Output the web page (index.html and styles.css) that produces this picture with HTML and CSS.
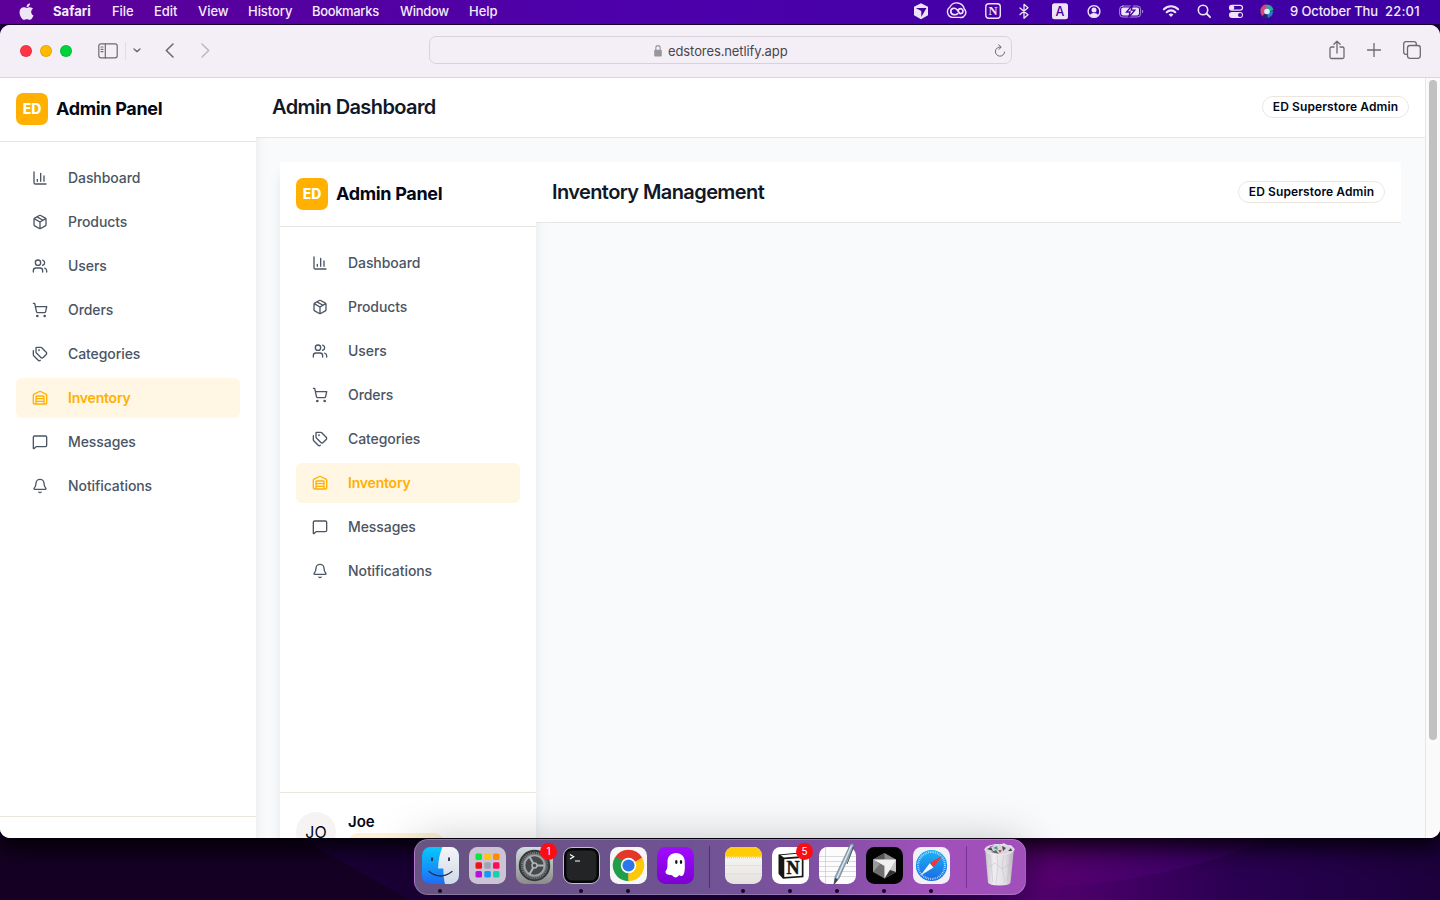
FILE: index.html
```html
<!DOCTYPE html>
<html lang="en">
<head>
<meta charset="utf-8">
<title>Admin Panel</title>
<link rel="stylesheet" href="styles.css">
</head>
<body>
<svg class="sprite" aria-hidden="true">
  <symbol id="i-chart" viewBox="0 0 24 24"><path d="M3 3v16a2 2 0 0 0 2 2h16M18 17V9M13 17V5M8 17v-3"/></symbol>
  <symbol id="i-package" viewBox="0 0 24 24"><path d="M11 21.73a2 2 0 0 0 2 0l7-4A2 2 0 0 0 21 16V8a2 2 0 0 0-1-1.73l-7-4a2 2 0 0 0-2 0l-7 4A2 2 0 0 0 3 8v8a2 2 0 0 0 1 1.73zM12 22V12M3.29 7 12 12l8.71-5M7.5 4.27l9 5.15"/></symbol>
  <symbol id="i-users" viewBox="0 0 24 24"><path d="M16 21v-2a4 4 0 0 0-4-4H6a4 4 0 0 0-4 4v2M22 21v-2a4 4 0 0 0-3-3.87M16 3.13a4 4 0 0 1 0 7.75"/><circle cx="9" cy="7" r="4"/></symbol>
  <symbol id="i-cart" viewBox="0 0 24 24"><circle cx="8" cy="21" r="1"/><circle cx="19" cy="21" r="1"/><path d="M2.05 2.05h2l2.66 12.42a2 2 0 0 0 2 1.58h9.78a2 2 0 0 0 1.95-1.57l1.65-7.43H5.12"/></symbol>
  <symbol id="i-tags" viewBox="0 0 24 24"><path d="M13.172 2a2 2 0 0 1 1.414.586l6.71 6.71a2.4 2.4 0 0 1 0 3.408l-4.592 4.592a2.4 2.4 0 0 1-3.408 0l-6.71-6.71A2 2 0 0 1 6 9.172V3a1 1 0 0 1 1-1zM2 7v6.172a2 2 0 0 0 .586 1.414l6.71 6.71a2.4 2.4 0 0 0 3.191.193"/><circle cx="10.5" cy="6.5" r=".5"/></symbol>
  <symbol id="i-warehouse" viewBox="0 0 24 24"><path d="M18 21V10a1 1 0 0 0-1-1H7a1 1 0 0 0-1 1v11M22 19a2 2 0 0 1-2 2H4a2 2 0 0 1-2-2V8a2 2 0 0 1 1.132-1.803l7.95-3.974a2 2 0 0 1 1.837 0l7.948 3.974A2 2 0 0 1 22 8zM6 13h12M6 17h12"/></symbol>
  <symbol id="i-message" viewBox="0 0 24 24"><path d="M22 17a2 2 0 0 1-2 2H6.828a2 2 0 0 0-1.414.586l-2.202 2.202A.71.71 0 0 1 2 21.286V5a2 2 0 0 1 2-2h16a2 2 0 0 1 2 2z"/></symbol>
  <symbol id="i-bell" viewBox="0 0 24 24"><path d="M10.268 21a2 2 0 0 0 3.464 0M3.262 15.326A1 1 0 0 0 4 17h16a1 1 0 0 0 .74-1.673C19.41 13.956 18 12.499 18 8A6 6 0 0 0 6 8c0 4.499-1.411 5.956-2.738 7.326"/></symbol>
  <linearGradient id="g-finder" x2="0" y2="1"><stop stop-color="#08c8fd"/><stop offset="1" stop-color="#1d6cf5"/></linearGradient>
  <linearGradient id="g-face" x2="0" y2="1"><stop stop-color="#f5f5f7"/><stop offset="1" stop-color="#cfd9e8"/></linearGradient>
  <linearGradient id="g-gear" x2="0" y2="1"><stop stop-color="#d3dde2"/><stop offset="1" stop-color="#8c8b88"/></linearGradient>
  <linearGradient id="g-ghost" x2="0" y2="1"><stop stop-color="#a00cff"/><stop offset="1" stop-color="#7d00d2"/></linearGradient>
  <linearGradient id="g-paper" x2="0" y2="1"><stop stop-color="#fbfaf8"/><stop offset="1" stop-color="#e4e1de"/></linearGradient>
  <linearGradient id="g-safari" x2="0" y2="1"><stop stop-color="#19b4f8"/><stop offset="1" stop-color="#1b68e2"/></linearGradient>
  <linearGradient id="g-trash" x2="1" y2="0"><stop stop-color="#c3bfc8"/><stop offset=".3" stop-color="#efedf1"/><stop offset=".7" stop-color="#e1dee3"/><stop offset="1" stop-color="#b7b2bb"/></linearGradient>
  <linearGradient id="g-wave" x2="1" y2="0"><stop stop-color="#22004a"/><stop offset=".35" stop-color="#56006f"/><stop offset=".7" stop-color="#42006a"/><stop offset="1" stop-color="#2d0055"/></linearGradient>
  <linearGradient id="g-deep" x2="1" y2="0"><stop stop-color="#1d0042"/><stop offset=".22" stop-color="#52006f"/><stop offset=".6" stop-color="#2a0052"/><stop offset="1" stop-color="#1c003c"/></linearGradient>
</svg>

<div class="desktop">
  <svg class="wallpaper" viewBox="0 0 1440 62">
    <path d="M0 0h300l110 62H0z" fill="#150024"/>
    <path d="M300 0h760v62H410z" fill="#1a0036"/>
    <path d="M930 62V0h510v62z" fill="url(#g-deep)"/>
    <path d="M930 0h340q-80 38-210 49-60 6-130 13z" fill="url(#g-wave)"/>
  </svg>
  <header class="menubar">
    <svg class="apple" viewBox="0 0 384 512"><path d="M318.700 268.700c-.2-36.700 16.400-64.400 50-84.800-18.800-26.900-47.200-41.700-84.700-44.600-35.500-2.800-74.300 20.700-88.500 20.700-15 0-49.400-19.700-76.400-19.700C63.300 141.200 4 184.800 4 273.500q0 39.300 14.400 81.200c12.800 36.700 59 126.700 107.200 125.200 25.200-.6 43-17.900 75.800-17.900 31.800 0 48.300 17.900 76.400 17.900 48.600-.7 90.400-82.500 102.600-119.300-65.200-30.700-61.700-90-61.700-91.900zm-56.600-164.200c27.300-32.400 24.800-61.900 24-72.500-24.100 1.400-52 16.400-67.900 34.900-17.500 19.800-27.800 44.300-25.600 71.900 26.100 2 49.900-11.400 69.500-34.300z"/></svg>
    <nav class="menus"><b>Safari</b><span>File</span><span>Edit</span><span>View</span><span>History</span><span>Bookmarks</span><span>Window</span><span>Help</span></nav>
    <div class="tray">
      <svg viewBox="0 0 24 24"><path class="f" d="M12 4.200l7 3.500v8.600l-7 3.900-7-3.900V7.700z"/><path d="M6.800 9h10.700l-5.200 9v-6z" fill="#4700a4"/></svg>
      <svg viewBox="0 0 24 24"><path class="s" stroke-width="1.400" d="M8.500 18.400A5.600 5.600 0 0 1 5.800 8.300 7.700 7.700 0 0 1 20.300 10a5 5 0 0 1-4.600 8.400z"/><path class="s" stroke-width="1.700" d="M13.700 14.600c-2 2-6.900 1.400-6.900-2.200 0-3.300 4.200-4.200 6.200-1.700l3.200 4c2.600.3 4-3 1.700-4.600-1.300-.9-3.300-.1-4 1.500"/></svg>
      <svg viewBox="0 0 24 24"><rect class="s" x="4.800" y="4.800" width="14.500" height="14.500" rx="3" stroke-width="1.400"/><text class="f serif" x="12" y="16.300" font-size="12.500" text-anchor="middle">N</text></svg>
      <svg viewBox="0 0 24 24"><path class="s" stroke-width="1.300" d="M8 9l8 6.800-4 3.400V5.300l4 3.400-8 6.800"/></svg>
      <svg viewBox="0 0 24 24"><rect class="f" x="4" y="4.200" width="16" height="16" rx="2.500"/><text x="12" y="16.500" font-size="12.500" text-anchor="middle" fill="#4300a4">A</text></svg>
      <svg viewBox="0 0 24 24"><circle class="s" cx="12" cy="12.500" r="5.900" stroke-width="1.400"/><circle class="f" cx="12" cy="10.900" r="2.500"/><path class="f" d="M7.800 16.300c1.600-3 6.800-3 8.400 0-2.200 2.500-6.200 2.500-8.400 0z"/></svg>
      <svg viewBox="0 0 26 24"><rect class="s dim" x="1.600" y="7" width="21" height="11" rx="3.200"/><rect class="f" x="3.200" y="8.600" width="17.800" height="7.800" rx="1.800"/><path class="f dim" d="M24 10.800c1.700.5 1.700 3 0 3.500z"/><path d="M14.500 6l-6 7h3.600l-1.500 5.500 6.200-7.300h-3.600z" fill="#eee4f8" stroke="#4200a5" stroke-width="1.300"/></svg>
      <svg viewBox="0 0 24 24"><path class="s" stroke-width="2.100" d="M4.900 10.300c4.200-4 10-4 14.200 0M7.700 13.200c2.500-2.500 6.100-2.500 8.600 0"/><path class="f" d="M12 18l-2.400-2.500q2.400-2 4.800 0z"/></svg>
      <svg viewBox="0 0 24 24"><circle class="s" cx="11" cy="11" r="4.700" stroke-width="1.600"/><path class="s" stroke-width="1.800" d="M14.500 14.500l3.600 3.700"/></svg>
      <svg viewBox="0 0 24 24"><rect class="s" x="5.500" y="6.300" width="13" height="4.800" rx="2.400" stroke-width="1.200"/><circle class="f" cx="8" cy="8.700" r="2.300"/><rect class="f" x="5" y="13" width="14" height="6" rx="3"/><circle cx="16" cy="16" r="2" fill="#4200a5"/></svg>
      <svg viewBox="0 0 24 24"><circle cx="12" cy="12.500" r="7" fill="#292668"/><path d="M5.500 10q4-7 8-3l-1.500 6-5 4q-2-3-1.500-7z" fill="#d7467f"/><path d="M11 6q6-1 7.500 5l-6 2z" fill="#2ba89a"/><path d="M12 13l6-1q0 5-5 7z" fill="#287bcf"/><circle cx="12" cy="12.500" r="2.800" fill="#d9f1ff"/></svg>
      <span class="date">9 October Thu</span><span class="clock">22:01</span>
    </div>
  </header>

  <section class="window">
    <div class="toolbar">
      <div class="lights"><i class="red"></i><i class="amber"></i><i class="green"></i></div>
      <svg class="tb-side" viewBox="0 0 20 16"><rect x=".8" y=".8" width="18.400" height="14" rx="2"/><path d="M7.300 1v14M3 4h2M3 6.300h2M3 8.600h2"/></svg>
      <i class="tb-rule"></i>
      <svg class="tb-caret" viewBox="0 0 8 5"><path d="M1 1l3 2.600L7 1"/></svg>
      <svg class="tb-back" viewBox="0 0 9 15"><path d="M8 1L1.300 7.500 8 14"/></svg>
      <svg class="tb-next" viewBox="0 0 9 15"><path d="M1 1l6.700 6.500L1 14"/></svg>
      <div class="address">
        <svg class="lock" viewBox="0 0 8 12"><path d="M2 6V3.500a2 2 0 0 1 4 0V6" fill="none" stroke="#98959b" stroke-width="1"/><rect x=".5" y="5.300" width="7" height="6.200" rx="1" fill="#98959b"/></svg>
        <span>edstores.netlify.app</span>
        <svg class="reload" viewBox="0 0 12 14"><path d="M6.500 3A4.600 4.600 0 1 0 10.600 8M4.600 .8L7.200 3 5 5.400"/></svg>
      </div>
      <div class="tb-right">
        <svg viewBox="0 0 16 20" width="16" height="20"><path d="M5 7H2.500Q1 7 1 8.500v8.500q0 1.500 1.500 1.500h11q1.500 0 1.500-1.500V8.500Q15 7 13.500 7H11M8 13V1.300M4.900 4.200L8 1.200l3.100 3"/></svg>
        <svg viewBox="0 0 14 14" width="14" height="14"><path d="M7 .3v13.400M.3 7h13.400"/></svg>
        <svg viewBox="0 0 18 18" width="18" height="18"><rect x="4.500" y="4.500" width="12.800" height="12.800" rx="2.500"/><path d="M4.500 13.300H3q-2.300 0-2.300-2.300V3Q.7.700 3 .7h8q2.300 0 2.300 2.300v1.500"/></svg>
      </div>
    </div>

    <div class="viewport">
      <div class="layout">
        <aside class="sidebar">
          <div class="brand"><span class="logo">ED</span><span class="name">Admin Panel</span></div>
          <nav class="nav">
            <a><svg><use href="#i-chart"/></svg><span>Dashboard</span></a>
            <a><svg><use href="#i-package"/></svg><span>Products</span></a>
            <a><svg><use href="#i-users"/></svg><span>Users</span></a>
            <a><svg><use href="#i-cart"/></svg><span>Orders</span></a>
            <a><svg><use href="#i-tags"/></svg><span>Categories</span></a>
            <a class="active"><svg><use href="#i-warehouse"/></svg><span>Inventory</span></a>
            <a><svg><use href="#i-message"/></svg><span>Messages</span></a>
            <a><svg><use href="#i-bell"/></svg><span>Notifications</span></a>
          </nav>
          <div class="outer-account"></div>
        </aside>
        <main class="main">
          <div class="head"><h1>Admin Dashboard</h1><span class="pill">ED Superstore Admin</span></div>
          <div class="body">
            <div class="layout nested">
              <aside class="sidebar">
                <div class="brand"><span class="logo">ED</span><span class="name">Admin Panel</span></div>
                <nav class="nav">
                  <a><svg><use href="#i-chart"/></svg><span>Dashboard</span></a>
                  <a><svg><use href="#i-package"/></svg><span>Products</span></a>
                  <a><svg><use href="#i-users"/></svg><span>Users</span></a>
                  <a><svg><use href="#i-cart"/></svg><span>Orders</span></a>
                  <a><svg><use href="#i-tags"/></svg><span>Categories</span></a>
                  <a class="active"><svg><use href="#i-warehouse"/></svg><span>Inventory</span></a>
                  <a><svg><use href="#i-message"/></svg><span>Messages</span></a>
                  <a><svg><use href="#i-bell"/></svg><span>Notifications</span></a>
                </nav>
                <div class="account"><span class="avatar">JO</span><div class="who"><b>Joe</b><i class="role"></i></div></div>
              </aside>
              <div class="main">
                <div class="head"><h1>Inventory Management</h1><span class="pill">ED Superstore Admin</span></div>
              </div>
            </div>
          </div>
        </main>
      </div>
      <div class="scrollbar"><i class="thumb"></i></div>
    </div>
  </section>

  <footer class="dock">
    <div class="app on"><svg viewBox="0 0 37 37"><rect width="37" height="37" rx="8.500" fill="url(#g-finder)"/><path d="M20.500 0h8A8.500 8.500 0 0 1 37 8.500v20a8.500 8.500 0 0 1-8.500 8.500H23q-1.500-6-1.700-15.500H16Q16.500 9 20.500 0z" fill="url(#g-face)"/><path d="M10 10.500v3.500M27 10.500v3.500" stroke="#20324a" stroke-width="1.800"/><path d="M7 24.500q11.500 9 23 0" fill="none" stroke="#1f3047" stroke-width="1.300" stroke-linecap="round"/></svg></div>
    <div class="app"><svg viewBox="0 0 37 37"><rect width="37" height="37" rx="8.500" fill="#ccc3d5"/><g><rect x="6.500" y="6.500" width="6.500" height="6.500" rx="1.500" fill="#0de640"/><rect x="15.300" y="6.500" width="6.500" height="6.500" rx="1.500" fill="#ffc50a"/><rect x="24" y="6.500" width="6.500" height="6.500" rx="1.500" fill="#ff8b05"/><rect x="6.500" y="15.300" width="6.500" height="6.500" rx="1.500" fill="#ee1118"/><rect x="15.300" y="15.300" width="6.500" height="6.500" rx="1.500" fill="#9fa5b0"/><rect x="24" y="15.300" width="6.500" height="6.500" rx="1.500" fill="#ff0b58"/><rect x="6.500" y="24" width="6.500" height="6.500" rx="1.500" fill="#b80ee0"/><rect x="15.300" y="24" width="6.500" height="6.500" rx="1.500" fill="#1597fb"/><rect x="24" y="24" width="6.500" height="6.500" rx="1.500" fill="#12d3a9"/></g></svg></div>
    <div class="app"><svg viewBox="0 0 37 37"><rect width="37" height="37" rx="8.500" fill="url(#g-gear)"/><circle cx="18.500" cy="18.500" r="14.700" fill="#777b7d" stroke="#34383a" stroke-width="2"/><circle cx="18.500" cy="18.500" r="12.700" fill="none" stroke="#383b3d" stroke-width="1.500" stroke-dasharray="1 1"/><circle cx="18.500" cy="18.500" r="10" fill="#45494b" stroke="#a2a6a8" stroke-width="1.700"/><path d="M18.500 18.500h10M18.500 18.500l-5-8.700M18.500 18.500l-5 8.700" stroke="#b0b4b6" stroke-width="2"/><circle cx="18.500" cy="18.500" r="2.500" fill="#45494b" stroke="#b0b4b6" stroke-width="1.500"/></svg><span class="badge">1</span></div>
    <div class="app on"><svg viewBox="0 0 37 37"><rect x=".5" y=".5" width="36" height="36" rx="8.500" fill="#050506" stroke="#b9c3ce"/><rect x="3.500" y="3.500" width="30" height="30" rx="5.500" fill="#232425"/><path d="M7 7.500l3.700 2.200L7 12" fill="none" stroke="#fff" stroke-width="1.200"/><path d="M12 14h5" stroke="#fff"/></svg></div>
    <div class="app on"><svg viewBox="0 0 37 37"><rect width="37" height="37" rx="8.500" fill="#f6f6f7"/><path d="M18.500 18.500L4.900 10.600A15.700 15.700 0 0 1 32.100 10.600z" fill="#e53729"/><path d="M18.500 18.500L32.100 10.600A15.700 15.700 0 0 1 18.500 34.200z" fill="#fdc80b"/><path d="M18.500 18.500V34.200A15.700 15.700 0 0 1 4.900 10.600z" fill="#229d49"/><path d="M18.500 10.600h13.600l-6.800 4z" fill="#e53729"/><path d="M25.300 22.400L18.500 34.200V22z" fill="#fdc80b"/><path d="M11.700 22.400L4.900 10.600 14 13z" fill="#229d49"/><circle cx="18.500" cy="18.500" r="7.700" fill="#fff"/><circle cx="18.500" cy="18.500" r="6.100" fill="#2b76e8"/></svg></div>
    <div class="app"><svg viewBox="0 0 37 37"><rect width="37" height="37" rx="8.500" fill="url(#g-ghost)"/><path d="M10.500 14.500c0-5 3.500-8.500 8.600-8.500 5.200 0 8.700 3.600 8.700 9 0 6 .4 9-1.300 12.500-1 2-3 1.800-4.300.4-1.500 1.700-2.900 3.300-5.200 2.100-1.500-.8-1.300-2-3.300-2-4.300.2-6.200-2.300-4.700-4.400 1.700-2 1.500-4.500 1.500-9.100z" fill="#fff"/><ellipse cx="19.300" cy="15" rx="1.200" ry="2" fill="#111"/><ellipse cx="24" cy="15" rx="1.200" ry="2" fill="#111"/></svg></div>
    <i class="split"></i>
    <div class="app on"><svg viewBox="0 0 37 37"><rect width="37" height="37" rx="8.500" fill="url(#g-paper)"/><path d="M0 9.700V8.500A8.500 8.500 0 0 1 8.500 0h20A8.500 8.500 0 0 1 37 8.500v1.200z" fill="#ffcc05"/><path d="M0 10.800h37" stroke="#b5afa8" stroke-dasharray="1 1" stroke-width=".7"/><path d="M0 18.500h37M0 27h37" stroke="#d9d6d2" stroke-width=".6"/></svg></div>
    <div class="app on"><svg viewBox="0 0 37 37"><rect width="37" height="37" rx="8.500" fill="#fff"/><path d="M6.500 7.500L26 5.800l5.500 4v20.500L11 31.700l-4.500-5z" fill="#161616"/><path d="M8.700 8.200L25 6.800l3.500 2.400-16.600 1.200z" fill="#fff"/><path d="M12.300 12.300l17.500-1.200v17.700l-17.500 1.200z" fill="#fff"/><text class="serif" x="21" y="26.600" font-size="18" font-weight="bold" text-anchor="middle" fill="#151515" stroke="#151515" stroke-width=".5">N</text></svg><span class="badge">5</span></div>
    <div class="app on"><svg class="spill" viewBox="0 0 37 37"><rect width="37" height="37" rx="8.500" fill="#fcfcfc"/><path d="M0 9.500h37M0 14.500h37M0 19.500h37M0 24.500h37M0 29.500h37" stroke="#c9cbd0" stroke-width=".7"/><path d="M6.500 0v37" stroke="#f0b8b8" stroke-width=".7"/><path d="M31.500-3q2.500-1.500 3.500 1L20 31.500l-5 6 1-7.500z" fill="#93a9ba" stroke="#657987" stroke-width=".7"/><path d="M32.500-1.500L18 31" stroke="#dceaf3" stroke-width="1.300"/><path d="M16 31l3 1.500-4.500 6z" fill="#494440"/><path d="M34.500 0L28 17" stroke="#40535f"/></svg></div>
    <div class="app on"><svg viewBox="0 0 37 37"><rect width="37" height="37" rx="8.500" fill="#030303"/><path d="M18.500 6L30 12.500 18.500 19 7 12.500z" fill="#8a8a8a"/><path d="M18.500 6v6.500H7z" fill="#555"/><path d="M7 12.500L18.500 19v12.500L7 25z" fill="#6f6f6f"/><path d="M7 12.500L14 17 7 25z" fill="#999"/><path d="M18.500 19L30 12.500V25l-11.500 6.500z" fill="#c5c5c5"/><path d="M7 12.500h23L18.500 31.500V19z" fill="#f0f0f0"/><path d="M30 25l-6-2-5.500 8.500z" fill="#333"/></svg></div>
    <div class="app on"><svg viewBox="0 0 37 37"><rect width="37" height="37" rx="8.500" fill="#f1f0f4"/><circle cx="18.500" cy="18.500" r="15.600" fill="url(#g-safari)"/><circle cx="18.500" cy="18.500" r="13.400" fill="none" stroke="#d5efff" stroke-width="2" stroke-dasharray=".7 1.100"/><path d="M29.500 8.500L16.700 16.300l3.800 4.200z" fill="#f6352e"/><path d="M7.500 28.500l9.200-12.200 3.800 4.200z" fill="#f4f6f8"/></svg></div>
    <i class="split last"></i>
    <div class="app"><svg class="spill" viewBox="0 0 37 37"><path d="M4 1l3 34.500Q8 38.500 18.500 38.500T29.500 35.500L33 1z" fill="url(#g-trash)"/><path d="M9 8l3 27M16 8l1 10-2 19M23 8l-2 11 3 17M30 8l-4 26M8 20l6-4 7 6 8-5" fill="none" stroke="#b9b4be" stroke-width=".6" opacity=".7"/><path d="M4 2l3-3 4 1 3-3 5 1 4-2 4 3 3-1 3 4-4 4-11 2-9-2z" fill="#d7d6dc"/><path d="M6 2l4-2 2 4zM21-1l4 2-3 3zM27 4l3-3 1 3z" fill="#4d4b50"/><path d="M12 1l4-2 1 4z" fill="#34a799"/><path d="M17 3l4 0-2 3z" fill="#a56558"/><path d="M10 5l5-2 3 4z" fill="#67656a"/><ellipse cx="18.500" cy="2.500" rx="14.700" ry="5" fill="none" stroke="#ece9ef"/></svg></div>
  </footer>
</div>
</body>
</html>
```

FILE: styles.css
```css
* { box-sizing: border-box; }
body { margin: 0; font-family: Inter, "Liberation Sans", sans-serif; color: #020817; }
h1 { margin: 0; }
i { font-style: normal; }
.sprite { position: absolute; width: 0; height: 0; }
.serif { font-family: "Liberation Serif", serif; font-weight: bold; }

.desktop {
  width: 1440px; height: 900px; overflow: hidden; position: relative;
  display: flex; flex-direction: column;
  background: linear-gradient(#2b0060 0 60px, #190030 60px);
}
.wallpaper { position: absolute; left: 0; top: 838px; width: 1440px; height: 62px; }

.menubar {
  height: 25px; flex: none; display: flex; align-items: center; position: relative; z-index: 2;
  padding: 0 0 2px 19px; color: #f3ebfa; font-size: 13px; font-weight: 500;
  background: linear-gradient(90deg, #5d0099, #4c00ab 45%, #3d00a2); border-bottom: 1px solid #17002b;
}
.apple { width: 15px; height: 19px; fill: #eee5f6; margin-right: 19px; }
.menus { display: grid; grid-template-columns: 59px 42px 44px 50px 64px 88px 69px 40px; line-height: 22px; letter-spacing: -.05px; }
.menus b { font-weight: 700; letter-spacing: .05px; }
.menus span:nth-child(6) { letter-spacing: -.35px; }
.menus span:nth-child(7) { letter-spacing: -.3px; }
.tray {
  margin-left: auto; display: grid; align-items: center; line-height: 22px; width: 531px;
  grid-template-columns: 35px 37px 31px 36px 34px 36px 41px 33px 32px 31px 35px 95px 55px;
}
.tray svg { width: 24px; height: 24px; }
.tray svg:nth-child(7) { width: 26px; }
.tray .f { fill: #eee4f8; }
.tray .s { fill: none; stroke: #eee4f8; stroke-linecap: round; stroke-linejoin: round; }
.tray .dim { opacity: .6; }
.date, .clock { white-space: nowrap; }
.date { letter-spacing: -.12px; }
.clock { letter-spacing: .2px; }

.window {
  height: 813px; flex: none; display: flex; flex-direction: column; overflow: hidden; position: relative;
  border-radius: 10px; background: #fff; box-shadow: 0 4px 26px 4px #000;
}
.toolbar {
  height: 53px; flex: none; display: flex; align-items: center;
  padding: 0 19px 1px 20px; background: #f4eff6; border-bottom: 1px solid #d9d5da;
}
.toolbar > svg, .tb-right svg, .reload { fill: none; stroke: #6d696f; stroke-width: 1.4; stroke-linecap: round; stroke-linejoin: round; }
.lights { display: flex; gap: 8px; margin-right: 26px; }
.lights i { width: 12px; height: 12px; border-radius: 50%; border: 1px solid rgba(0, 0, 0, .1); }
.red { background: #ff3544; }
.amber { background: #ffba00; }
.green { background: #00d33b; }
.toolbar .tb-side { width: 20px; height: 16px; stroke-width: 1.2; }
.tb-rule { width: 1px; height: 18px; background: #e1dbe3; margin: 0 7px 0 7px; }
.tb-caret { width: 8px; height: 5px; margin-right: 24px; }
.toolbar .tb-back { width: 9px; height: 15px; margin-right: 27px; stroke-width: 1.6; }
.toolbar .tb-next { width: 9px; height: 15px; stroke: #b9b4bb; margin-right: 219px; }
.address {
  width: 583px; height: 28px; border: 1px solid #d8d3da; border-radius: 7px; flex: none; margin-bottom: 2px;
  display: flex; align-items: center; padding: 2px 5px 0 223px; font-size: 13px; color: #49464c;
}
.address span { letter-spacing: -.1px; }
.lock { width: 10px; height: 13px; margin-right: 5px; }
.reload { width: 12px; height: 14px; margin-left: auto; stroke-width: 1; }
.tb-right { display: flex; align-items: center; margin: 0 0 2px auto; gap: 22px; }
.tb-right svg { stroke-width: 1.3; }

.viewport { flex: 1; min-height: 0; display: flex; overflow: hidden; background: #f8fafc; }
.layout { flex: 1; min-width: 0; display: flex; }
.sidebar {
  width: 256px; flex: none; display: flex; flex-direction: column; position: relative;
  background: #fff; box-shadow: 0 10px 15px -3px rgba(0, 0, 0, .1), 0 4px 6px -4px rgba(0, 0, 0, .1);
}
.brand { height: 64px; flex: none; display: flex; align-items: center; gap: 8px; padding: 0 16px 1px; border-bottom: 1px solid #e8e6e3; }
.nested .brand { height: 65px; }
.logo {
  width: 32px; height: 32px; border-radius: 7px; background: #ffb000; color: #fff;
  font-size: 14px; font-weight: 800; line-height: 32px; text-align: center;
}
.name { font-size: 18px; font-weight: 700; letter-spacing: -.33px; line-height: 24px; padding-bottom: 1px; }
.nested .name { padding-bottom: 0; }
.nav { flex: 1; padding: 16px; display: flex; flex-direction: column; gap: 4px; }
.nav a {
  height: 40px; display: flex; align-items: center; gap: 20px; padding: 0 16px;
  border-radius: 6px; color: #4b5563; font-size: 14px; font-weight: 500; letter-spacing: -.08px;
}
.nav span { line-height: 20px; }
.nav svg { width: 16px; height: 16px; fill: none; stroke: currentColor; stroke-width: 2; stroke-linecap: round; stroke-linejoin: round; }
.nav .active { background: #fff6e4; color: #ffb000; }
.nav .active span { font-weight: 600; letter-spacing: -.2px; }
.account { height: 78px; flex: none; border-top: 1px solid #ebe7e0; padding: 16px; display: flex; gap: 12px; }
.outer-account { height: 22px; flex: none; border-top: 1px solid #ebe7e0; }
.avatar { width: 40px; height: 40px; flex: none; margin-top: 3px; border-radius: 50%; background: #f5f4f2; line-height: 40px; text-align: center; }
.who { display: flex; flex-direction: column; padding-top: 1px; }
.who b { font-size: 15px; font-weight: 600; line-height: 23px; }
.role { width: 96px; height: 20px; border-radius: 10px; background: #fff1d5; }

.main { flex: 1; min-width: 0; display: flex; flex-direction: column; }
.head {
  height: 60px; flex: none; display: flex; align-items: center; justify-content: space-between;
  padding: 0 16px 1px; background: #fff; border-bottom: 1px solid #e8e6e3; position: relative;
}
.nested .head { height: 61px; }
h1 { font-size: 20px; font-weight: 600; letter-spacing: -.6px; color: #111827; }
.pill { width: 147px; height: 22px; border: 1px solid #ebe7e0; border-radius: 11px; font-size: 12px; font-weight: 600; letter-spacing: .1px; line-height: 20px; text-align: center; white-space: nowrap; }
.body { flex: 1; min-height: 0; display: flex; padding: 24px 24px 0; }
.nested .sidebar { height: 708px; }
.scrollbar { width: 15px; flex: none; background: #fafafa; border-left: 1px solid #e6e6e6; padding: 2px 3px; }
.thumb { display: block; width: 8px; height: 660px; border-radius: 4px; background: #c1c1c1; }

.dock {
  position: absolute; left: 414px; top: 839px; width: 612px; height: 56px;
  display: flex; gap: 10px; padding: 7px; border-radius: 14px;
  border: 1px solid rgba(255, 255, 255, .22);
  background: linear-gradient(90deg, #685381, #6e5392 45%, #8250a4 68%, #a150bb 85%, #a04fbb);
  box-shadow: 0 4px 45px rgba(0, 0, 0, .25);
}
.app { position: relative; width: 37px; height: 37px; }
.app svg { display: block; width: 37px; height: 37px; }
.app .spill { overflow: visible; }
.on::after { content: ""; position: absolute; left: 16px; bottom: -9px; width: 4px; height: 4px; border-radius: 50%; background: #140820; }
.split { width: 11px; height: 42px; margin-top: -1px; background: linear-gradient(#4b3267, #4b3267) center / 1px 100% no-repeat; }
.last { background: linear-gradient(#7a3395, #7a3395) 6px / 1px 100% no-repeat; }
.badge {
  position: absolute; left: 24px; top: -4px; width: 17px; height: 17px; border-radius: 50%;
  background: #fb0d14; color: #fff; font-size: 10px; line-height: 17px; text-align: center;
}
```
